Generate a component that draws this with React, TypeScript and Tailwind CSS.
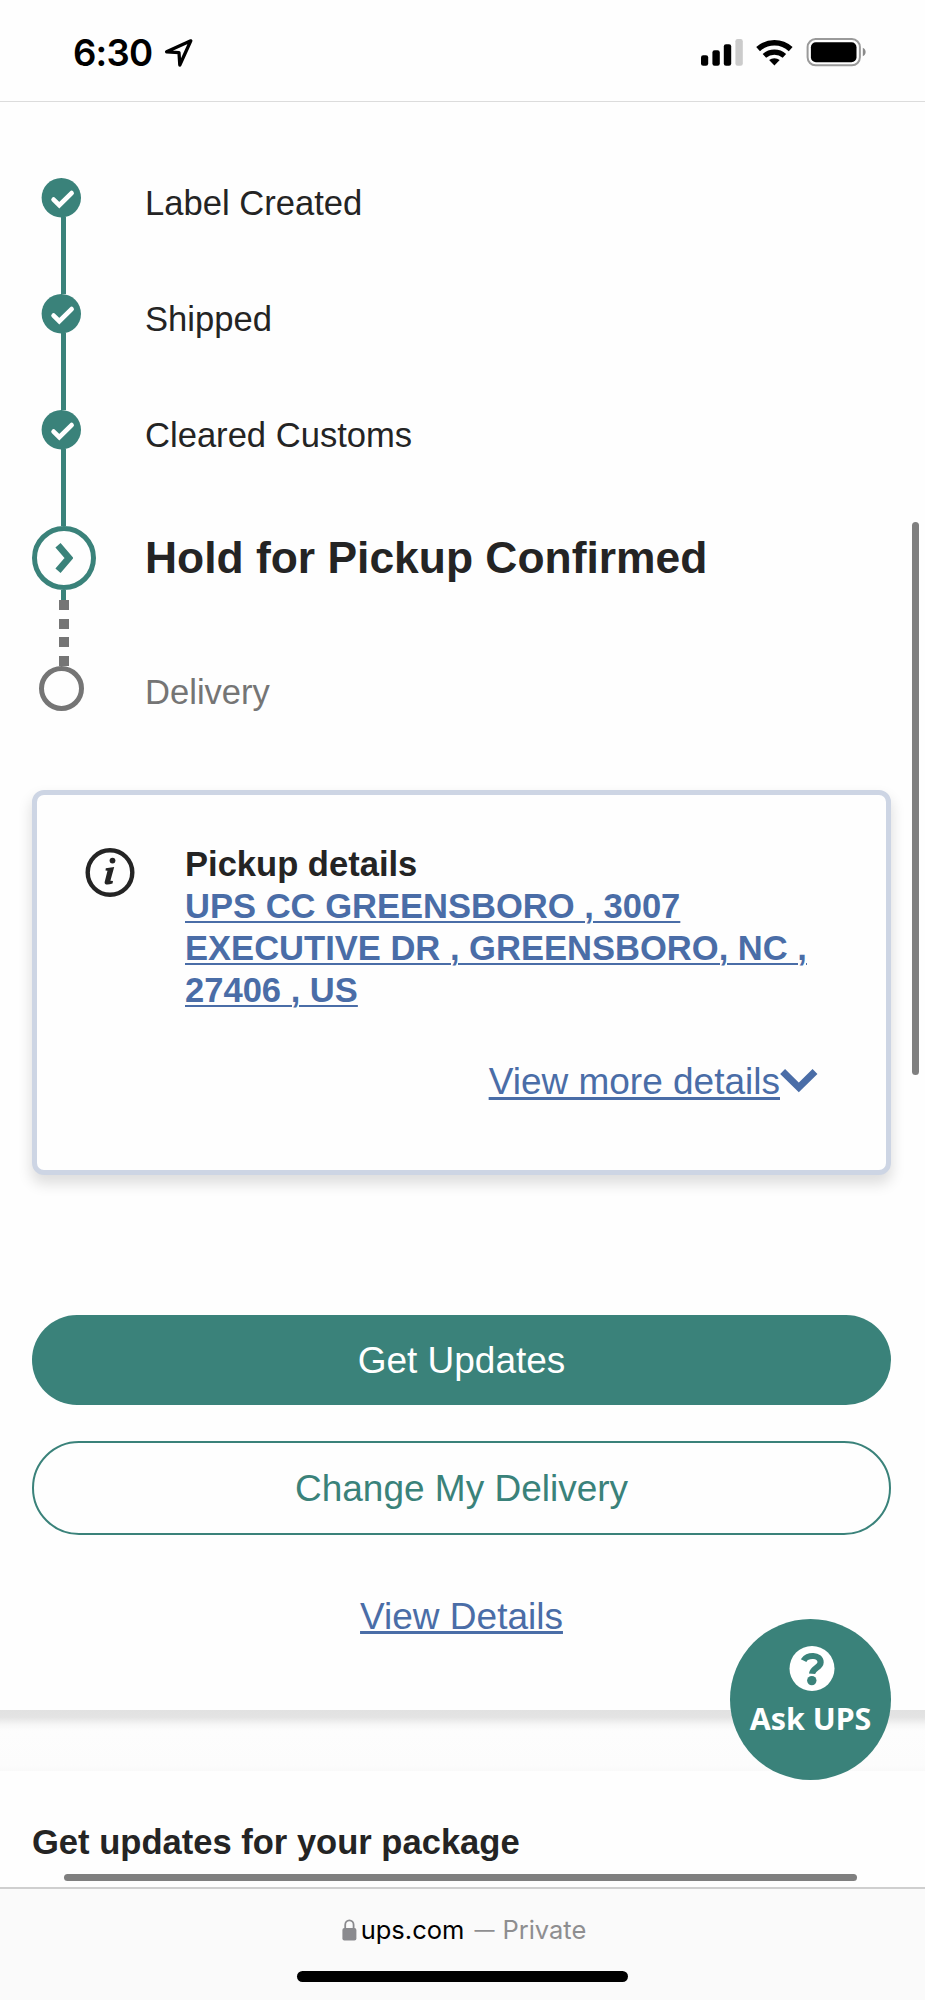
import type { ReactNode } from 'react';

const completedSteps = ['Label Created', 'Shipped', 'Cleared Customs'];

function StatusBar() {
  return (
    <header className="flex h-[102px] shrink-0 items-start justify-between border-b-[1.5px] border-[#dcdcdc] pl-[73px] pr-[59px] pt-[38px]">
      <div className="flex items-start">
        <span className="-mt-[7px] w-[91px] font-['Inter'] text-[36.6px] font-semibold leading-[44px] tracking-[-0.8px] text-black">6:30</span>
        <svg width="30" height="30" viewBox="0 0 30 30" fill="none" stroke="#000" strokeWidth="3.3" strokeLinejoin="round">
          <path d="M26.8 2.8 2.6 13.8 15 14.6 15.8 27Z" />
        </svg>
      </div>
      <div className="flex items-start">
        <svg width="43" height="29" viewBox="0 0 43 29" className="mr-[13px]">
          <rect x="1" y="17.3" width="7.2" height="10.5" rx="2.2" />
          <rect x="12.4" y="12.3" width="7.4" height="15.5" rx="2.2" />
          <rect x="23.8" y="6.3" width="7.4" height="21.5" rx="2.2" />
          <rect x="35.4" y="1" width="7.4" height="26.8" rx="2.2" fill="#cbcbcb" />
        </svg>
        <svg width="37" height="29" viewBox="0 0 37 29" className="mr-[13px]">
          <path d="M2.1 11.1a24.2 24.2 0 0 1 32.6 0" fill="none" stroke="#000" strokeWidth="5.6" />
          <path d="M8.4 17.9a15.1 15.1 0 0 1 20 0" fill="none" stroke="#000" strokeWidth="5.2" />
          <path d="M18.4 27.6 13.1 22.1a8.4 8.4 0 0 1 10.6 0Z" />
        </svg>
        <svg width="60" height="29" viewBox="0 0 60 29">
          <rect x="1.6" y="1.1" width="52.3" height="26.2" rx="8" fill="none" stroke="#9a9a9a" strokeWidth="2" />
          <rect x="4.9" y="4.2" width="45.6" height="20" rx="5" />
          <path d="M56.8 9.8c3.8 1.5 3.8 7 0 8.5Z" fill="#8b8b8b" />
        </svg>
      </div>
    </header>
  );
}

function CheckBadge() {
  return (
    <svg width="40" height="40" viewBox="0 0 40 40" className="ml-[9px]">
      <circle cx="20.3" cy="19.8" r="19.7" fill="#3a827a" />
      <path d="m12.6 21.6 5.7 5.6 12.3-12.1" fill="none" stroke="#fff" strokeWidth="4.7" strokeLinecap="round" />
    </svg>
  );
}

function Progress() {
  return (
    <ol className="text-[34.6px] leading-[42px] text-[#242424]">
      {completedSteps.map(label => (
        <li key={label} className="flex h-[116px]">
          <div className="flex w-[113px] flex-col">
            <CheckBadge />
            <div className="-mt-px ml-[29px] w-[5px] flex-1 bg-[#3a827a]" />
          </div>
          <span className="mt-1">{label}</span>
        </li>
      ))}
      <li className="flex h-[140px]">
        <div className="flex w-[113px] flex-col">
          <div className="flex h-16 w-16 items-center justify-center rounded-full border-[5px] border-[#3a827a]">
            <svg width="18" height="32" viewBox="0 0 18 32">
              <path d="m3 3.2 11 12.8L3 28.8" fill="none" stroke="#3a827a" strokeWidth="6.8" />
            </svg>
          </div>
          <div className="ml-[29px] h-[10px] w-[5px] bg-[#3a827a]" />
          <div className="ml-[27px] flex flex-1 flex-col justify-between">
            <i className="h-[10px] w-[10px] bg-[#757575]" />
            <i className="h-[10px] w-[10px] bg-[#757575]" />
            <i className="h-[10px] w-[10px] bg-[#757575]" />
            <i className="h-[10px] w-[10px] bg-[#757575]" />
          </div>
        </div>
        <h2 className="mt-[5px] text-[44.4px] font-bold leading-[54px]">Hold for Pickup Confirmed</h2>
      </li>
      <li className="flex text-[#757575]">
        <div className="w-[113px]">
          <div className="ml-[7px] h-[45px] w-[45px] rounded-full border-[5px] border-[#757575]" />
        </div>
        <span className="mt-[5px]">Delivery</span>
      </li>
    </ol>
  );
}

function PickupCard() {
  return (
    <section className="mt-[77px] h-[385px] rounded-xl border-[5px] border-[#cdd5e4] bg-[#fefefe] pt-[49px] shadow-[0_8px_14px_1px_rgba(0,0,0,0.13)]">
      <div className="flex">
        <svg width="50" height="50" viewBox="0 0 50 50" className="ml-[48px] mt-[3px]">
          <circle cx="25" cy="25.5" r="22.3" fill="none" stroke="#242424" strokeWidth="4.4" />
          <circle cx="27.5" cy="13.6" r="2.9" fill="#242424" />
          <path d="M20.8 21.2 29.2 20 25.4 33.8 28 34.1 27.5 36.6Q19.4 39.2 19.6 35.2L22.5 23.8 20.5 23.4Z" fill="#242424" />
        </svg>
        <div className="ml-[50px] text-[34.55px] font-bold leading-[41.9px]">
          <h3 className="text-[#242424]">Pickup details</h3>
          <a className="block w-[640px] text-[#4a6da7] underline decoration-[2px] underline-offset-[3px]">
            UPS CC GREENSBORO , 3007
            <br />
            EXECUTIVE DR , GREENSBORO, NC ,
            <br />
            27406 , US
          </a>
        </div>
      </div>
      <div className="mt-[47px] flex justify-end pr-[68px] text-[#4a6da7]">
        <a className="text-[37px] leading-[46px] underline decoration-[2.5px] underline-offset-[3px]">View more details</a>
        <svg width="38" height="26" viewBox="0 0 38 26" className="mt-[9px]">
          <path d="m2.6 3.6 16.2 15.8L35 3.6" fill="none" stroke="currentColor" strokeWidth="7" />
        </svg>
      </div>
    </section>
  );
}

function PillButton({ className, children }: { className: string; children: ReactNode }) {
  return (
    <button className={`flex w-full items-center justify-center rounded-full pt-[2px] text-[37px] leading-[46px] ${className}`}>
      {children}
    </button>
  );
}

function AskButton() {
  return (
    <button className="absolute left-[730px] top-[1619px] flex h-[161px] w-[161px] flex-col items-center rounded-full bg-[#3a827a] pt-[27px]">
      <svg width="46" height="46" viewBox="0 0 46 46" className="ml-[2px]">
        <circle cx="23" cy="22.5" r="22.5" fill="#fff" />
        <path d="M14.6 14.6C17.6 8.4 31.8 8 31.6 16.4 31.4 21.6 23.6 21.8 23 27.8" fill="none" stroke="#3a827a" strokeWidth="6.2" />
        <circle cx="22.8" cy="34.6" r="4.7" fill="#3a827a" />
      </svg>
      <span className="mt-[7px] font-['Noto_Sans'] text-[30.4px] font-bold leading-[40px] text-white">Ask UPS</span>
    </button>
  );
}

export default function App() {
  return (
    <div className="relative flex h-[2000px] w-[925px] flex-col overflow-hidden bg-[#fefefe] font-['Liberation_Sans',Arial,sans-serif]">
      <StatusBar />

      <main className="flex-1">
        <div className="h-[1608px] pl-8 pr-[34px] pt-[76px]">
          <Progress />
          <PickupCard />
          <PillButton className="mt-[140px] h-[90px] bg-[#3a827a] text-white">Get Updates</PillButton>
          <PillButton className="mt-9 h-[94px] border-[2.5px] border-[#3a827a] text-[#3a827a]">Change My Delivery</PillButton>
          <div className="mt-[59px] text-center text-[37px] leading-[46px] text-[#4a6da7]">
            <a className="underline decoration-[2.5px] underline-offset-[2px]">View Details</a>
          </div>
        </div>
        <div className="h-[61px] bg-[linear-gradient(#e1e1e1,#e4e4e4_12%,#f6f6f6_24%,#fdfdfd_34%,#fcfcfc_90%,#f9f9f9)]" />
        <h3 className="ml-8 mt-[50px] text-[34.55px] font-bold leading-[42px] text-[#242424]">Get updates for your package</h3>
        <div className="ml-16 mt-[11px] h-[7px] w-[793px] rounded-full bg-[#7f7f7f]" />
      </main>

      <footer className="flex h-[113px] shrink-0 flex-col items-center border-t-2 border-[#cfcfcf] bg-[#fafafa]">
        <div className="mt-[23px] flex h-[36px] items-center pl-[3px] font-['Inter'] text-[25.5px] leading-[36px]">
          <svg width="15" height="22" viewBox="0 0 15 22" className="mr-[4px]">
            <rect x="0.4" y="9" width="14" height="12.4" rx="2" fill="#8a8a8e" />
            <path d="M3.2 10V5.9a4.2 4.6 0 0 1 8.4 0V10" fill="none" stroke="#8a8a8e" strokeWidth="1.8" />
          </svg>
          <span className="text-black">ups.com</span>
          <span className="ml-[10px] text-[20px] text-[#8e8e90]">—</span>
          <span className="ml-[8px] text-[#8e8e90]">Private</span>
        </div>
        <div className="mt-[23px] h-[11px] w-[331px] rounded-full bg-black" />
      </footer>

      <AskButton />
      <div className="absolute left-[912px] top-[522px] h-[553px] w-[7px] rounded-full bg-[#7f7f7f]" />
    </div>
  );
}
